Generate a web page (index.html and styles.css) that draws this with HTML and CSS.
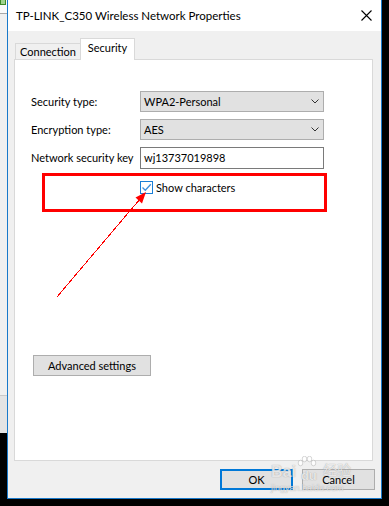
FILE: index.html
```html
<!DOCTYPE html>
<html>
<head>
<meta charset="utf-8">
<link rel="stylesheet" href="styles.css">
</head>
<body>
<div class="desktop">
  <div class="strip">
    <div class="strip-top"><span class="strip-icon"></span></div>
    <div class="strip-mid"></div>
    <div class="strip-low"></div>
  </div>
  <div class="window">
    <div class="titlebar">
      <span class="title">TP-LINK_C350 Wireless Network Properties</span>
      <svg class="close" width="11" height="11" viewBox="0 0 11 11"><path d="M0.5 0.5 L10.5 10.5 M10.5 0.5 L0.5 10.5" stroke="#000" stroke-width="1.1" fill="none"/></svg>
    </div>
    <div class="tabs">
      <div class="tab">Connection</div>
      <div class="tab tab-active">Security</div>
    </div>
    <div class="panel">
      <div class="form">
        <div class="label">Security type:</div>
        <div class="select"><span>WPA2-Personal</span><svg width="8" height="5" viewBox="0 0 8 5"><path d="M0.5 0.5 L4 4 L7.5 0.5" stroke="#333" fill="none"/></svg></div>
        <div class="label">Encryption type:</div>
        <div class="select"><span>AES</span><svg width="8" height="5" viewBox="0 0 8 5"><path d="M0.5 0.5 L4 4 L7.5 0.5" stroke="#333" fill="none"/></svg></div>
        <div class="label">Network security key</div>
        <div class="input">wj13737019898</div>
      </div>
      <div class="highlight">
        <div class="check-row">
          <span class="checkbox"><svg width="11" height="11" viewBox="0 0 11 11"><path d="M1.5 5.5 L4.3 8.3 L9.8 2.2" stroke="#3d8fdc" stroke-width="1.3" fill="none"/></svg></span>
          <span class="check-label">Show characters</span>
        </div>
      </div>
      <button class="btn adv">Advanced settings</button>
    </div>
    <div class="footer">
      <button class="btn ok">OK</button>
      <button class="btn">Cancel</button>
    </div>
  </div>
</div>
<svg class="arrow" width="389" height="506" viewBox="0 0 389 506">
  <line x1="56.5" y1="297.5" x2="140" y2="199" stroke="#ff0000" stroke-width="1"/>
  <polygon points="146,192 142,203.5 135.5,197.5" fill="#ff0000"/>
</svg>
<div class="watermark">
  <div class="wm-top"><span class="wm-bai">Bai</span><span class="wm-paw">
    <svg width="20" height="12" viewBox="0 0 20 12"><g fill="rgba(255,255,255,0.85)" stroke="rgba(150,150,150,0.55)" stroke-width="0.7"><ellipse cx="3.5" cy="7" rx="2.3" ry="2.8"/><ellipse cx="7.5" cy="3" rx="2.3" ry="2.8"/><ellipse cx="12.5" cy="3" rx="2.3" ry="2.8"/><ellipse cx="16.5" cy="7" rx="2.3" ry="2.8"/></g></svg><span class="wm-du">du</span></span><span class="wm-cn">经验</span></div>
  <div class="wm-url">jingyan.baidu.com</div>
</div>
</body>
</html>
```
FILE: styles.css
```css
* { box-sizing: border-box; }
html, body { margin: 0; padding: 0; }
body {
  width: 389px;
  height: 506px;
  background: #000;
  font-family: Lato, "Noto Sans", sans-serif;
  font-size: 11px;
  color: #000;
  position: relative;
  overflow: hidden;
}
.desktop {
  display: flex;
  align-items: flex-start;
  height: 506px;
}
.strip {
  width: 7px;
  display: flex;
  flex-direction: column;
}
.strip-top {
  height: 14px;
  background: #fafafa;
  border-bottom: 1px solid #a8a8a8;
}
.strip-icon {
  display: block;
  width: 6px;
  height: 5px;
  border: 1px solid #3d8a2a;
  border-top: 0;
  background: #9fd38d;
}
.strip-mid {
  height: 382px;
  background: #f0f0f0;
  border-bottom: 1px solid #c9c9c9;
}
.strip-low {
  height: 37px;
  background: #e4e4e4;
}
.window {
  width: 375px;
  height: 499px;
  border: 1px solid #1979ca;
  border-top: 0;
  background: #f0f0f0;
  display: flex;
  flex-direction: column;
}
.titlebar {
  height: 31px;
  background: #fff;
  display: flex;
  align-items: center;
  justify-content: space-between;
  padding: 0 9px 0 8px;
}
.title {
  font-size: 11.5px;
}
.close { display: block; }
.tabs {
  margin-top: 7px;
  height: 21px;
  display: flex;
  align-items: flex-end;
  padding-left: 7px;
  position: relative;
  z-index: 1;
}
.tab {
  height: 16px;
  width: 66px;
  border: 1px solid #d9d9d9;
  border-bottom: 0;
  background: #f0f0f0;
  display: flex;
  align-items: center;
  justify-content: center;
  font-size: 11px;
  line-height: 14px;
  padding-top: 1px;
}
.tab-active {
  height: 22px;
  width: 55px;
  margin-left: -1px;
  margin-bottom: -1px;
  background: #fff;
  padding-top: 0;
  padding-bottom: 3px;
}
.panel {
  height: 402px;
  margin: 0 8px 0 6px;
  border: 1px solid #d9d9d9;
  background: #fff;
  padding: 31px 0 0 16px;
  display: flex;
  flex-direction: column;
  align-items: flex-start;
}
.form {
  display: grid;
  grid-template-columns: 109px 184px;
  grid-template-rows: 21px 21px 22px;
  row-gap: 7px;
  align-items: center;
}
.form > :nth-child(5), .form > :nth-child(6) { margin-top: -1px; }
.label { font-size: 11px; white-space: nowrap; }
.select {
  height: 21px;
  background: #e1e1e1;
  border: 1px solid #adadad;
  display: flex;
  align-items: center;
  justify-content: space-between;
  padding: 0 4px 0 3px;
}
.select svg { display: block; }
.input {
  height: 22px;
  border: 1px solid #7a7a7a;
  background: #fff;
  display: flex;
  align-items: center;
  padding-left: 3px;
}
.highlight {
  margin-top: 4px;
  margin-left: 11px;
  width: 285px;
  height: 39px;
  border: 3px solid #ff0000;
  padding: 5px 0 0 95px;
}
.check-row {
  display: flex;
  align-items: center;
  gap: 3px;
  height: 13px;
}
.checkbox {
  width: 13px;
  height: 13px;
  border: 1px solid #1a7fd6;
  background: #fff;
  display: flex;
  align-items: center;
  justify-content: center;
}
.checkbox svg { display: block; }
.check-label { font-size: 11px; }
.btn {
  font-family: inherit;
  font-size: 11px;
  color: #000;
  background: #e1e1e1;
  border: 1px solid #adadad;
  height: 21px;
  width: 73px;
  padding: 0;
  margin: 0;
}
.adv {
  width: 118px;
  margin-top: 143px;
  margin-left: 2px;
}
.footer {
  flex: 1;
  display: flex;
  justify-content: flex-end;
  gap: 9px;
  padding: 8px 6px 0 0;
}
.ok {
  border: 2px solid #0078d7;
}
.arrow {
  position: absolute;
  left: 0;
  top: 0;
  pointer-events: none;
  shape-rendering: crispEdges;
}
.arrow polygon { shape-rendering: auto; }
.watermark {
  position: absolute;
  left: 271px;
  top: 456px;
  width: 92px;
  pointer-events: none;
  color: rgba(255, 255, 255, 0.75);
  text-shadow: 0 0 1px rgba(110, 110, 110, 0.7);
  font-family: "Liberation Sans", sans-serif;
}
.wm-top {
  display: flex;
  align-items: flex-end;
  height: 25px;
}
.wm-bai {
  font-size: 16px;
  font-weight: bold;
  line-height: 16px;
  margin-bottom: 1px;
}
.wm-paw {
  position: relative;
  margin-left: 1px;
  width: 21px;
  height: 25px;
}
.wm-paw svg { position: absolute; left: 0; top: 0; }
.wm-du {
  position: absolute;
  left: 4px;
  bottom: -1px;
  font-size: 13px;
  line-height: 13px;
  font-weight: bold;
}
.wm-cn {
  font-family: "Noto Sans CJK SC", sans-serif;
  font-size: 14px;
  line-height: 16px;
  margin-left: 5px;
  margin-bottom: 4px;
}
.wm-url {
  font-size: 9px;
  line-height: 9px;
  margin-top: 3px;
}
```
